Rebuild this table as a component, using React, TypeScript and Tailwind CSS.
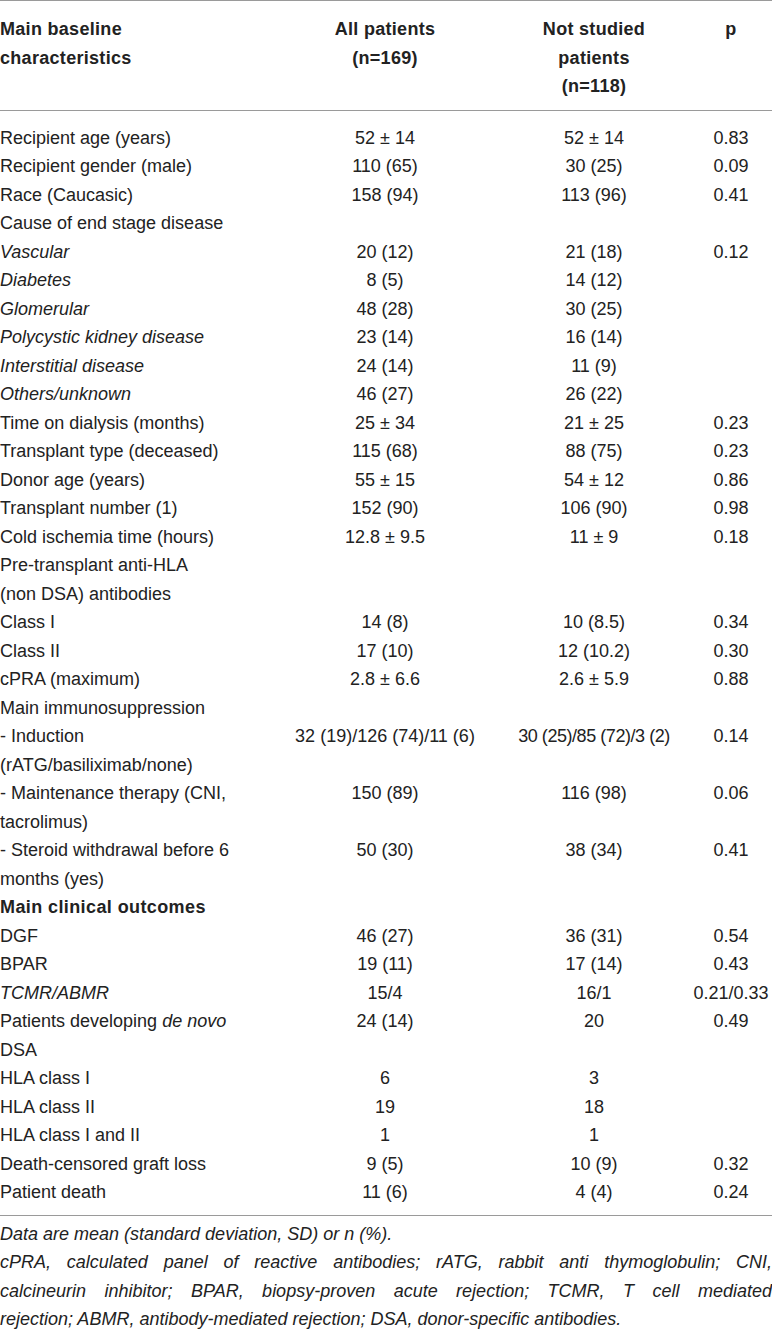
type Row = {
  label: React.ReactNode
  all?: string
  not?: string
  p?: string
  tight?: boolean
}

const rows: Row[] = [
  { label: 'Recipient age (years)', all: '52 ± 14', not: '52 ± 14', p: '0.83' },
  { label: 'Recipient gender (male)', all: '110 (65)', not: '30 (25)', p: '0.09' },
  { label: 'Race (Caucasic)', all: '158 (94)', not: '113 (96)', p: '0.41' },
  { label: 'Cause of end stage disease' },
  { label: <i>Vascular</i>, all: '20 (12)', not: '21 (18)', p: '0.12' },
  { label: <i>Diabetes</i>, all: '8 (5)', not: '14 (12)' },
  { label: <i>Glomerular</i>, all: '48 (28)', not: '30 (25)' },
  { label: <i>Polycystic kidney disease</i>, all: '23 (14)', not: '16 (14)' },
  { label: <i>Interstitial disease</i>, all: '24 (14)', not: '11 (9)' },
  { label: <i>Others/unknown</i>, all: '46 (27)', not: '26 (22)' },
  { label: 'Time on dialysis (months)', all: '25 ± 34', not: '21 ± 25', p: '0.23' },
  { label: 'Transplant type (deceased)', all: '115 (68)', not: '88 (75)', p: '0.23' },
  { label: 'Donor age (years)', all: '55 ± 15', not: '54 ± 12', p: '0.86' },
  { label: 'Transplant number (1)', all: '152 (90)', not: '106 (90)', p: '0.98' },
  { label: 'Cold ischemia time (hours)', all: '12.8 ± 9.5', not: '11 ± 9', p: '0.18' },
  { label: <>Pre-transplant anti-HLA<br />(non DSA) antibodies</> },
  { label: 'Class I', all: '14 (8)', not: '10 (8.5)', p: '0.34' },
  { label: 'Class II', all: '17 (10)', not: '12 (10.2)', p: '0.30' },
  { label: 'cPRA (maximum)', all: '2.8 ± 6.6', not: '2.6 ± 5.9', p: '0.88' },
  { label: 'Main immunosuppression' },
  { label: <>- Induction<br />(rATG/basiliximab/none)</>, all: '32 (19)/126 (74)/11 (6)', not: '30 (25)/85 (72)/3 (2)', p: '0.14', tight: true },
  { label: <>- Maintenance therapy (CNI,<br />tacrolimus)</>, all: '150 (89)', not: '116 (98)', p: '0.06' },
  { label: <>- Steroid withdrawal before 6<br />months (yes)</>, all: '50 (30)', not: '38 (34)', p: '0.41' },
  { label: <b className="tracking-[0.4px]">Main clinical outcomes</b> },
  { label: 'DGF', all: '46 (27)', not: '36 (31)', p: '0.54' },
  { label: 'BPAR', all: '19 (11)', not: '17 (14)', p: '0.43' },
  { label: <i>TCMR/ABMR</i>, all: '15/4', not: '16/1', p: '0.21/0.33' },
  { label: <>Patients developing <i>de novo</i><br />DSA</>, all: '24 (14)', not: '20', p: '0.49' },
  { label: 'HLA class I', all: '6', not: '3' },
  { label: 'HLA class II', all: '19', not: '18' },
  { label: 'HLA class I and II', all: '1', not: '1' },
  { label: 'Death-censored graft loss', all: '9 (5)', not: '10 (9)', p: '0.32' },
  { label: 'Patient death', all: '11 (6)', not: '4 (4)', p: '0.24' },
]

const grid = 'grid grid-cols-[252px_266px_152px_102px] items-start'

export default function App() {
  return (
    <div className="w-[772px] bg-white text-[18px] leading-[28.5px] text-[#222] font-['Liberation_Sans',Arial,sans-serif]">
      {/* header */}
      <div className={`${grid} border-t border-b border-[#9a9a9a] pt-[14px] pb-[9px] font-bold tracking-[0.3px]`}>
        <div>Main baseline<br />characteristics</div>
        <div className="text-center">All patients<br />(n=169)</div>
        <div className="text-center">Not studied<br />patients<br />(n=118)</div>
        <div className="pl-[20px] text-center">p</div>
      </div>

      {/* body */}
      <div className="border-b border-[#9a9a9a] pt-[13px] pb-[8px]">
        {rows.map((r, i) => (
          <div key={i} className={grid}>
            <div className="whitespace-nowrap">{r.label}</div>
            <div className="text-center whitespace-nowrap">{r.all}</div>
            <div className={`text-center whitespace-nowrap ${r.tight ? 'tracking-[-0.45px]' : ''}`}>{r.not}</div>
            <div className="pl-[20px] text-center whitespace-nowrap">{r.p}</div>
          </div>
        ))}
      </div>

      {/* footnotes */}
      <div className="pt-[4px] italic">
        <div>Data are mean (standard deviation, SD) or n (%).</div>
        <div className="text-justify [text-align-last:justify]">cPRA, calculated panel of reactive antibodies; rATG, rabbit anti thymoglobulin; CNI,</div>
        <div className="text-justify [text-align-last:justify]">calcineurin inhibitor; BPAR, biopsy-proven acute rejection; TCMR, T cell mediated</div>
        <div>rejection; ABMR, antibody-mediated rejection; DSA, donor-specific antibodies.</div>
      </div>
    </div>
  )
}
